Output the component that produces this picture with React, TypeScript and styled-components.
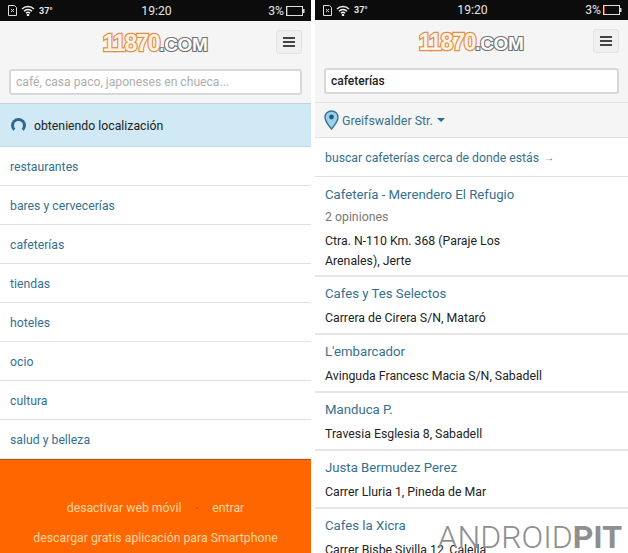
import React from "react";
import styled, { createGlobalStyle } from "styled-components";

const Global = createGlobalStyle`
html,body{margin:0;padding:0;background:#fff;}
body{font-family:Roboto,"Liberation Sans",sans-serif;width:628px;height:553px;overflow:hidden;}
*{box-sizing:border-box;}
`
const Page = styled.div`
position:relative;
width:628px;
height:553px;
overflow:hidden;
display:flex;
justify-content:space-between;
`
const Phone = styled.div<{ $w: number }>`
width:${p => p.$w}px;
height:553px;
overflow:hidden;
display:flex;
flex-direction:column;
background:#fff;
`
const StatusBar = styled.div<{ $h: number }>`
height:${p => p.$h}px;
flex:none;
background:#0c0c0c;
color:#e4e4e4;
display:grid;
grid-template-columns:1fr auto 1fr;
align-items:center;
padding:0 6px 0 8px;
font-size:12.2px;
`
const StatusLeft = styled.div`
display:flex;
align-items:center;
gap:4px;
`
const Temp = styled.span`
font-size:9px;
font-weight:700;
`
const StatusRight = styled.div`
display:flex;
align-items:center;
justify-content:flex-end;
gap:2px;
`
const Header = styled.div<{ $h: number }>`
height:${p => p.$h}px;
flex:none;
background:#f5f5f5;
padding:0 9px;
display:flex;
flex-direction:column;
`
const Brand = styled.div`
height:48px;
flex:none;
display:flex;
align-items:center;
position:relative;
justify-content:center;
padding:0 1px 4px 0;
`
const Logo = styled.div`
font-family:"Liberation Sans",sans-serif;
font-weight:700;
font-size:23px;
letter-spacing:-1.2px;
color:#fdf3e4;
paint-order:stroke fill;
-webkit-text-stroke:2.4px #e38f45;
span{font-size:19px;letter-spacing:-.4px;paint-order:stroke fill;-webkit-text-stroke:2.2px #6f6f6f;color:#fff;}
`
const MenuBtn = styled.button`
position:absolute;
right:0;
top:9px;
width:26px;
height:24px;
padding:0;
border:1px solid #e2e2e2;
border-radius:3px;
background:#f0f0f0;
display:flex;
flex-direction:column;
align-items:center;
justify-content:center;
gap:2px;
i{display:block;width:12px;height:2px;background:#444;}
`
const Search = styled.div<{ $filled?: boolean }>`
height:26px;
border:2px solid #d8d8d8;
border-radius:3px;
background:#fff;
padding:0 5px;
display:flex;
align-items:center;
font-size:${p => p.$filled ? 12 : 12.15}px;
color:${p => p.$filled ? "#222" : "#aeaeae"};
font-weight:${p => p.$filled ? 500 : 400};
`
const Notice = styled.div`
height:44px;
flex:none;
background:#d0e9f5;
border-top:1px solid #bfd6e1;
border-bottom:1px solid #c0d9e5;
display:flex;
align-items:center;
gap:8px;
padding:1px 11px 0;
font-size:12.25px;
color:#222;
`
const Spinner = styled.div`
width:15px;
height:15px;
border-radius:50%;
border:3px solid #2b6a94;
border-bottom-color:transparent;
`
const Row = styled.a`
display:flex;
align-items:center;
height:39px;
flex:none;
padding:1px 10px 0;
font-size:12.25px;
color:#36708f;
border-bottom:1px solid #e2e2e2;
`
const Footer = styled.div`
flex:1;
background:#ff6600;
border-top:1px solid #b55a1c;
color:#ffd6a0;
font-size:12.25px;
display:flex;
flex-direction:column;
align-items:center;
padding-top:41px;
gap:15px;
`
const FooterLine = styled.div`
display:flex;
gap:14px;
align-items:center;
line-height:15px;
b{color:#d8401a;font-size:8px;}
`
const LocationBar = styled.div`
height:36px;
flex:none;
background:#f5f5f5;
border-top:1px solid #e2e2e2;
border-bottom:1px solid #e2e2e2;
display:flex;
align-items:center;
gap:3px;
padding:0 9px;
font-size:12.4px;
color:#36708f;
`
const Caret = styled.i`
width:0;
height:0;
margin-left:1px;
border-left:4px solid transparent;
border-right:4px solid transparent;
border-top:4px solid #2b6a94;
`
const Arrow = styled.span`
font-size:10px;
font-weight:700;
margin-left:5px;
`
const Place = styled.div<{ $long?: boolean }>`
flex:none;
padding:${p => p.$long ? "8px 10px 3.5px" : "7px 10px 4.5px"};
border-bottom:2px solid #e6e6e6;
display:flex;
flex-direction:column;
`
const Name = styled.div<{ $tight?: boolean }>`
font-size:13.2px;
line-height:20px;
color:#36708f;
margin-bottom:${p => p.$tight ? 2 : 5}px;
`
const Opinions = styled.div`
font-size:12.3px;
line-height:20px;
color:#777;
margin-bottom:5px;
`
const Address = styled.div<{ $narrow?: boolean }>`
font-size:12.3px;
line-height:19.5px;
color:#222;
width:${p => p.$narrow ? "220px" : "auto"};
`
const Watermark = styled.div`
position:absolute;
right:6px;
bottom:0;
height:32px;
font-size:32px;
line-height:32px;
font-weight:300;
color:#8f8f8f;
white-space:nowrap;
b{font-weight:700;}
`

const Status = ({ h }: { h: number }) => (
    <StatusBar $h={h}>
        <StatusLeft>
            <svg width="9" height="11" viewBox="0 0 9 11" fill="none" stroke="#ddd">
                <path d="M.5.5h6l2 2v8h-8z" />
                <path d="M3 4l3 3M6 4l-3 3" />
            </svg>
            <svg width="14" height="11" viewBox="0 0 14 11" fill="none" stroke="#eee" strokeWidth="1.4">
                <path d="M1 4a8.5 8.5 0 0 1 12 0M3 6.3a5.3 5.3 0 0 1 8 0M5 8.2a2.6 2.6 0 0 1 4 0" />
                <circle cx="7" cy="10" r=".6" fill="#eee" />
            </svg>
            <Temp>37°</Temp>
        </StatusLeft>
        <span>19:20</span>
        <StatusRight>
            <span>3%</span>
            <svg width="19" height="10" viewBox="0 0 19 10" fill="none">
                <rect x=".5" y=".5" width="16" height="9" stroke="#ddd" />
                <rect x="17" y="3" width="1.5" height="4" fill="#ddd" />
                <rect x="1" y="1" width="1" height="8" fill="#a33" />
            </svg>
        </StatusRight>
    </StatusBar>
)

const Top = ({ text, filled }: { text: string, filled?: boolean }) => (
    <>
        <Brand>
            <Logo>11870<span>.COM</span></Logo>
            <MenuBtn aria-label="menu"><i /><i /><i /></MenuBtn>
        </Brand>
        <Search $filled={filled}>{text}</Search>
    </>
)

const categories = ["restaurantes", "bares y cervecerías", "cafeterías", "tiendas", "hoteles", "ocio", "cultura", "salud y belleza"]
const places = [
    { name: "Cafetería - Merendero El Refugio", opinions: "2 opiniones", address: "Ctra. N-110 Km. 368 (Paraje Los Arenales), Jerte" },
    { name: "Cafes y Tes Selectos", address: "Carrera de Cirera S/N, Mataró" },
    { name: "L'embarcador", address: "Avinguda Francesc Macia S/N, Sabadell" },
    { name: "Manduca P.", address: "Travesia Esglesia 8, Sabadell" },
    { name: "Justa Bermudez Perez", address: "Carrer Lluria 1, Pineda de Mar" },
    { name: "Cafes la Xicra", address: "Carrer Bisbe Sivilla 12, Calella" },
]

export default function App() {
    return (
        <Page>
            <Global />
            <Phone $w={311}>
                <Status h={21} />
                <Header $h={82}>
                    <Top text="café, casa paco, japoneses en chueca..." />
                </Header>
                <Notice><Spinner />obteniendo localización</Notice>
                {categories.map((c, i) => <Row key={i}>{c}</Row>)}
                <Footer>
                    <FooterLine>desactivar web móvil<b>•</b>entrar</FooterLine>
                    <FooterLine>descargar gratis aplicación para Smartphone</FooterLine>
                </Footer>
            </Phone>
            <Phone $w={313}>
                <Status h={20} />
                <Header $h={82}>
                    <Top text="cafeterías" filled />
                </Header>
                <LocationBar>
                    <svg width="15" height="20" viewBox="0 0 15 20">
                        <path d="M7.5 1C3.8 1 1 3.8 1 7.3 1 11.5 7.5 19 7.5 19S14 11.5 14 7.3C14 3.8 11.2 1 7.5 1z" fill="#9bd0ea" stroke="#3a7398" strokeWidth="1.4" />
                        <circle cx="7.5" cy="7" r="2.4" fill="#25597c" />
                    </svg>
                    Greifswalder Str.<Caret />
                </LocationBar>
                <Row>buscar cafeterías cerca de donde estás<Arrow>→</Arrow></Row>
                {places.map((p, i) => (
                    <Place key={i} $long={!!p.opinions}>
                        <Name $tight={!!p.opinions}>{p.name}</Name>
                        {p.opinions && <Opinions>{p.opinions}</Opinions>}
                        <Address $narrow={!!p.opinions}>{p.address}</Address>
                    </Place>
                ))}
            </Phone>
            <Watermark>ANDROID<b>PIT</b></Watermark>
        </Page>
    )
}
